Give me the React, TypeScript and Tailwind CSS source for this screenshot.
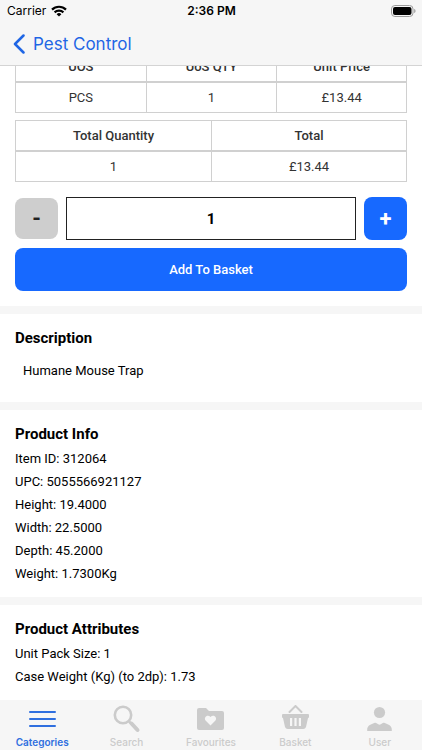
import React, { useState } from "react";

const info = [
  "Item ID: 312064",
  "UPC: 5055566921127",
  "Height: 19.4000",
  "Width: 22.5000",
  "Depth: 45.2000",
  "Weight: 1.7300Kg",
];

const attributes = ["Unit Pack Size: 1", "Case Weight (Kg) (to 2dp): 1.73"];

function WifiIcon() {
  return (
    <svg className="h-3 w-4" viewBox="0 0 16 12" fill="none" stroke="#000" strokeWidth="2.2">
      <path d="M1 4.6a10 10 0 0 1 14 0" />
      <path d="M3.6 7.4a6.3 6.3 0 0 1 8.8 0" />
      <path d="M8 11.6 5.6 9.2a3.4 3.4 0 0 1 4.8 0Z" fill="#000" stroke="none" />
    </svg>
  );
}

function BatteryIcon() {
  return (
    <svg className="h-3 w-[25px]" viewBox="0 0 25 12">
      <rect x="0.5" y="0.5" width="21.5" height="11" rx="3.4" fill="none" stroke="#9b9b9b" />
      <rect x="2" y="2" width="18.5" height="8" rx="2" fill="#000" />
      <path d="M23.2 4v4c.9-.4 1.3-1.1 1.3-2s-.4-1.6-1.3-2Z" fill="#9b9b9b" />
    </svg>
  );
}

function DataTable({ head, row }: { head: string[]; row: string[] }) {
  return (
    <table className="w-full table-fixed border-separate border-spacing-0 text-center text-[13px] leading-[29px] text-[#333]">
      <thead>
        <tr>
          {head.map((h) => (
            <th key={h} scope="col" className="border-y border-l border-[#d0d0d0] p-0 font-medium last:border-r">
              {h}
            </th>
          ))}
        </tr>
      </thead>
      <tbody>
        <tr>
          {row.map((c, i) => (
            <td key={i} className="border-y border-l border-[#d0d0d0] p-0 last:border-r">
              {c}
            </td>
          ))}
        </tr>
      </tbody>
    </table>
  );
}

function DetailSection({ title, lines }: { title: string; lines: string[] }) {
  return (
    <section className="border-t-8 border-[#f6f6f6] px-[15px] pt-3 pb-3">
      <h2 className="text-[15px] leading-6 font-bold">{title}</h2>
      <ul className="pt-px text-[13px] leading-[23px]">
        {lines.map((l) => (
          <li key={l}>{l}</li>
        ))}
      </ul>
    </section>
  );
}

const tabs = [
  {
    name: "Categories",
    icon: (
      <g fill="none" stroke="#2f6fdf" strokeWidth="2" strokeLinecap="round">
        <path d="M3 7h25M3 14h25M3 21h25" />
      </g>
    ),
  },
  {
    name: "Search",
    icon: (
      <g fill="none" stroke="#cbcbcb">
        <circle cx="12" cy="10" r="8.2" strokeWidth="2.6" />
        <path d="M18 16.5l2 2" strokeWidth="2.5" />
        <path d="M20.5 18.5l6 6.5" strokeWidth="4" strokeLinecap="round" />
      </g>
    ),
  },
  {
    name: "Favourites",
    icon: (
      <path
        fill="#cbcbcb"
        fillRule="evenodd"
        d="M4 3h7l3 3h13a2 2 0 0 1 2 2v15a2 2 0 0 1-2 2H4a2 2 0 0 1-2-2V5a2 2 0 0 1 2-2ZM15.500 20.500l4.700-4.700c2.800-3.200-1.600-7.200-4.700-3.900-3.100-3.300-7.500.7-4.700 3.900Z"
      />
    ),
  },
  {
    name: "Basket",
    icon: (
      <g>
        <path d="M9.500 7l6-6 6 6" fill="none" stroke="#cbcbcb" strokeWidth="2" strokeLinecap="round" />
        <path
          fill="#cbcbcb"
          fillRule="evenodd"
          d="M3 9h25a1 1 0 0 1 1 1v2a1 1 0 0 1-1 1l-2 9a3 3 0 0 1-3 2H8a3 3 0 0 1-3-2L3 13a1 1 0 0 1-1-1v-2a1 1 0 0 1 1-1ZM10 13v8h2.200v-8ZM14.400 13v8h2.200v-8ZM18.800 13v8h2.200v-8Z"
        />
      </g>
    ),
  },
  {
    name: "User",
    icon: (
      <g fill="#cbcbcb">
        <circle cx="15.500" cy="7.500" r="5.600" />
        <path d="M3.200 26c-.3-3.500.8-5.500 3.600-6.600l3.400-1.300c1.200-.5 2-.3 2.800.4 1.700 1.500 3.300 1.500 5 0 .8-.7 1.600-.9 2.800-.4l3.400 1.300c2.800 1.100 3.900 3.100 3.600 6.600Z" />
      </g>
    ),
  },
];

export default function App() {
  const [qty, setQty] = useState("1");
  const change = (d: number) => setQty((q) => String(Math.max(1, (Number(q) || 0) + d)));

  return (
    <div className="flex h-screen flex-col bg-white font-[Roboto,sans-serif] text-black">
      <header className="shrink-0 border-b border-[#d4d4d4] bg-[#f6f6f6] font-[Inter,sans-serif]">
        <div className="grid h-[22px] grid-cols-3 items-center pr-[6px] pl-[7px] text-[12px] leading-4">
          <div className="flex items-center gap-[5px]">
            <span>Carrier</span>
            <WifiIcon />
          </div>
          <time className="text-center font-semibold">2:36 PM</time>
          <div className="flex justify-end">
            <BatteryIcon />
          </div>
        </div>
        <button type="button" className="flex h-[43px] items-center gap-2 pl-[13px] text-[17px] leading-6 text-[#1f66e5]">
          <svg className="h-5 w-3" viewBox="0 0 12 20" fill="none" stroke="currentColor" strokeWidth="2.5" strokeLinecap="round" strokeLinejoin="round">
            <path d="M10.500 1.500 2 10l8.500 8.500" />
          </svg>
          Pest Control
        </button>
      </header>

      <main className="min-h-0 flex-1 overflow-hidden">
        <section className="-mt-[15px] px-[15px] pb-[15px]">
          <DataTable head={["UOS", "UoS QTY", "Unit Price"]} row={["PCS", "1", "£13.44"]} />
          <div className="pt-[7px]">
            <DataTable head={["Total Quantity", "Total"]} row={["1", "£13.44"]} />
          </div>
          <div className="flex items-center gap-2 pt-[15px] pb-2">
            <button type="button" aria-label="Decrease quantity" onClick={() => change(-1)} className="h-[41px] w-[43px] rounded-lg bg-[#cecece] text-[22px] leading-6 font-bold text-[#222]">
              -
            </button>
            <input
              aria-label="Quantity"
              value={qty}
              onChange={(e) => setQty(e.target.value)}
              className="h-[43px] min-w-0 flex-1 border border-[#222] text-center text-[15px] font-bold"
            />
            <button type="button" aria-label="Increase quantity" onClick={() => change(1)} className="h-[43px] w-[43px] rounded-lg bg-[#1769ff] text-[22px] leading-6 font-bold text-white">
              +
            </button>
          </div>
          <button type="button" className="h-[43px] w-full rounded-lg bg-[#1769ff] text-[13px] font-medium text-white">
            Add To Basket
          </button>
        </section>

        <section className="border-t-8 border-[#f6f6f6] px-[15px] pt-3 pb-5">
          <h2 className="text-[15px] leading-6 font-bold">Description</h2>
          <p className="px-2 pt-[9px] text-[13px] leading-[23px]">Humane Mouse Trap</p>
        </section>

        <DetailSection title="Product Info" lines={info} />
        <DetailSection title="Product Attributes" lines={attributes} />
      </main>

      <nav className="grid h-[50px] shrink-0 grid-cols-5 bg-[#f6f6f6] font-[Inter,sans-serif]">
        {tabs.map((t, i) => (
          <a key={t.name} href="#" className={`flex flex-col items-center pt-[5px] text-[10px] leading-4 ${i === 0 ? "font-semibold text-[#2f6fdf]" : "font-medium text-[#cbcbcb]"}`}>
            <svg className="h-[29px] w-[31px]" viewBox="0 0 31 29">
              {t.icon}
            </svg>
            {t.name}
          </a>
        ))}
      </nav>
    </div>
  );
}
